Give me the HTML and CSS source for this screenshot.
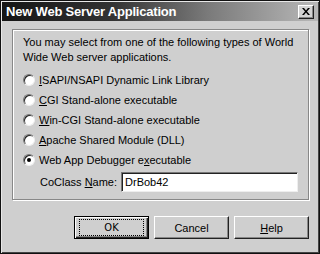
FILE: index.html
```html
<!DOCTYPE html>
<html lang="en">
<head>
  <meta charset="UTF-8" />
  <title>New Web Server Application</title>
  <link rel="stylesheet" href="styles.css">
</head>
<body>
  <div class="window">
    <div class="titlebar">
      <span class="title">New Web Server Application</span>
      <span class="close">
        <svg width="8" height="7" viewBox="0 0 8 7"><path d="M0 0h2l2 2.5L6 0h2L5 3.5 8 7H6L4 4.5 2 7H0l3-3.5z" fill="#000"/></svg>
      </span>
    </div>

    <div class="content">
      <div class="group">
        <p class="intro">You may select from one of the following types of World Wide Web server applications.</p>
        <div class="options">
          <label class="option"><span class="radio"></span><span><u>I</u>SAPI/NSAPI Dynamic Link Library</span></label>
          <label class="option"><span class="radio"></span><span><u>C</u>GI Stand-alone executable</span></label>
          <label class="option"><span class="radio"></span><span><u>W</u>in-CGI Stand-alone executable</span></label>
          <label class="option"><span class="radio"></span><span><u>A</u>pache Shared Module (DLL)</span></label>
          <label class="option"><span class="radio checked"></span><span>Web App Debugger e<u>x</u>ecutable</span></label>
        </div>
        <div class="coclass">
          <span class="coclass-label">CoClass <u>N</u>ame:</span>
          <div class="field">DrBob42</div>
        </div>
      </div>

      <div class="buttons">
        <div class="btn default"><span class="focus">OK</span></div>
        <div class="btn">Cancel</div>
        <div class="btn"><span><u>H</u>elp</span></div>
      </div>
    </div>
  </div>
</body>
</html>
```

FILE: styles.css
```css
body {
  margin: 0;
  background: #cfcfcf;
  font-family: 'Liberation Sans', Arial, sans-serif;
  font-size: 11px;
  color: #000;
}

.window {
  width: 320px;
  height: 254px;
  box-sizing: border-box;
  border: 1px solid #111;
  box-shadow: inset 1px 1px 0 #e8e8e8, inset -1px -1px 0 #444;
  background: #cfcfcf;
  display: flex;
  flex-direction: column;
}

.titlebar {
  margin: 1px 1px 0;
  height: 19px;
  background: linear-gradient(to right, #151515, #333 35%, #7a7a7a 65%, #b8b8b8);
  display: flex;
  justify-content: space-between;
  align-items: center;
  padding: 0 4px;
}

.title {
  font-weight: bold;
  font-size: 13px;
  color: #fff;
  letter-spacing: -0.2px;
}

.close {
  width: 16px;
  height: 14px;
  box-sizing: border-box;
  background: #d4d4d4;
  border: 1px solid;
  border-color: #fff #222 #222 #fff;
  box-shadow: inset -1px -1px 0 #888;
  display: flex;
  justify-content: center;
  align-items: center;
}

.content {
  flex: 1;
  padding: 8px 10px 0 11px;
  display: flex;
  flex-direction: column;
}

.group {
  height: 171px;
  box-sizing: border-box;
  border: 1px solid #888;
  box-shadow: 1px 1px 0 #fff, inset 1px 1px 0 #fff;
  padding: 5px 10px 0 10px;
}

.intro {
  margin: 0;
  line-height: 15px;
}

.options {
  margin-top: 5px;
  display: flex;
  flex-direction: column;
}

.option {
  height: 20px;
  display: flex;
  align-items: center;
  gap: 4px;
}

.radio {
  width: 12px;
  height: 12px;
  box-sizing: border-box;
  border-radius: 50%;
  background: #fff;
  border: 1px solid;
  border-color: #777 #eee #eee #777;
  box-shadow: inset 1px 1px 0 #222;
  position: relative;
}

.radio.checked::after {
  content: "";
  position: absolute;
  left: 3px;
  top: 3px;
  width: 4px;
  height: 4px;
  border-radius: 50%;
  background: #000;
}

.coclass {
  margin-top: 2px;
  padding-left: 17px;
  display: flex;
  align-items: center;
  gap: 4px;
}

.coclass-label {
  white-space: nowrap;
}

.field {
  flex: 1;
  height: 20px;
  box-sizing: border-box;
  background: #fff;
  border: 1px solid;
  border-color: #777 #eee #eee #777;
  box-shadow: inset 1px 1px 0 #222;
  padding: 1px 3px;
  line-height: 17px;
}

.buttons {
  margin-top: 16px;
  display: flex;
  justify-content: flex-end;
  gap: 5px;
}

.btn {
  width: 75px;
  height: 23px;
  box-sizing: border-box;
  background: #cfcfcf;
  border: 1px solid;
  border-color: #fff #222 #222 #fff;
  box-shadow: inset -1px -1px 0 #888;
  display: flex;
  justify-content: center;
  align-items: center;
}

.btn.default {
  border: 1px solid #000;
  box-shadow: inset 1px 1px 0 #fff, inset -1px -1px 0 #222, inset -2px -2px 0 #888;
}

.focus {
  width: 63px;
  height: 15px;
  border: 1px dotted #000;
  display: flex;
  justify-content: center;
  align-items: center;
  font-family: 'DejaVu Sans Condensed', sans-serif;
}
```
